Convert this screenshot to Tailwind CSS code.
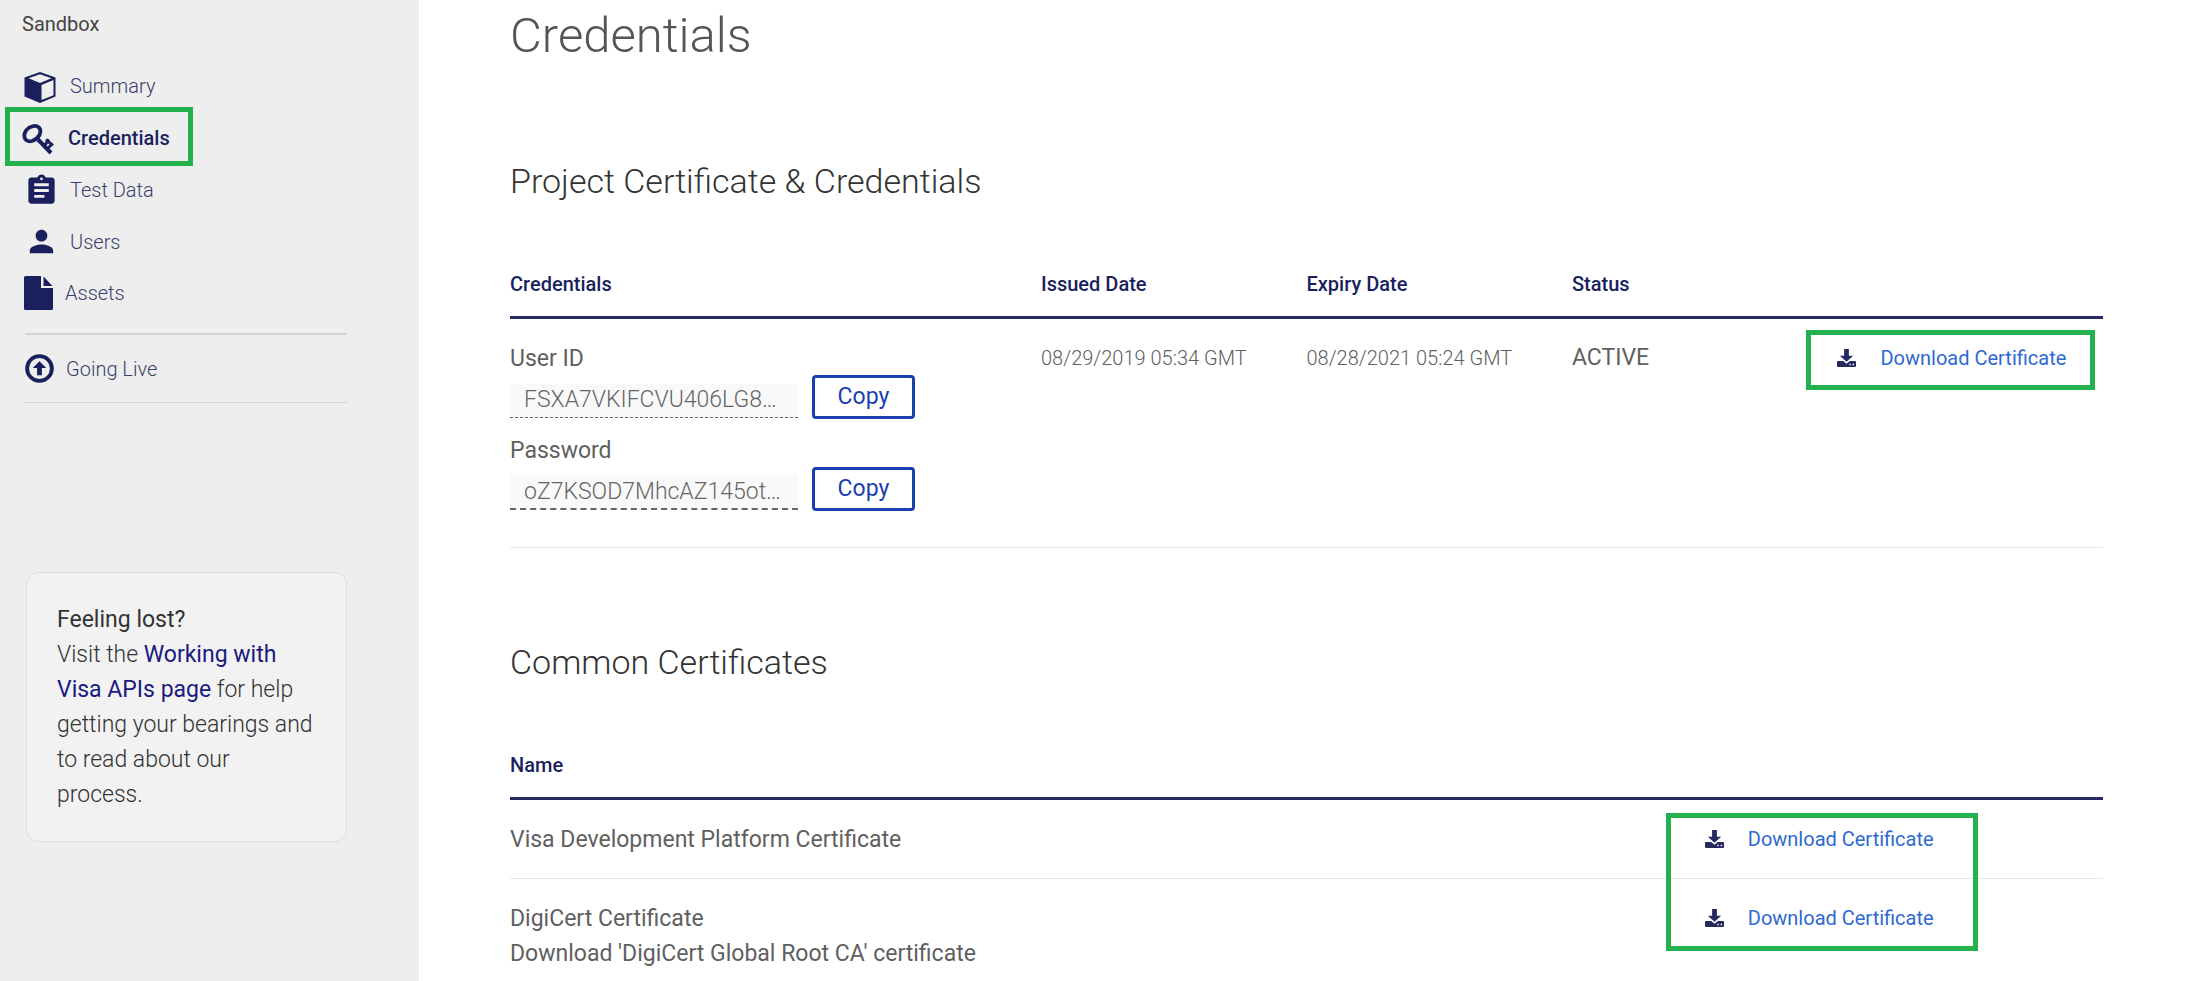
<!DOCTYPE html>
<html lang="en">
<head>
<meta charset="utf-8">
<title>Credentials</title>
<script src="https://cdn.jsdelivr.net/npm/@tailwindcss/browser@4"></script>
</head>
<body class="bg-white font-['Roboto',sans-serif] text-[#606060]">
<svg class="hidden" aria-hidden="true">
  <symbol id="download" viewBox="0 0 20 20">
    <path d="M7.500 0h5v7h4.500L10 13.500 3 7h4.500z"/>
    <path fill-rule="evenodd" d="M1 12.500H6.500L10 15.500l3.500-3H19q1 0 1 1v4.500q0 1-1 1H1q-1 0-1-1v-4.500q0-1 1-1zM13 15.500V17h1.500v-1.500zM16.500 15.500V17H18v-1.500z"/>
  </symbol>
</svg>
<div class="flex min-h-screen">
  <aside class="w-[419px] shrink-0 bg-[#eee] pt-2">
    <p class="pl-[22px] text-[20px] leading-8 text-[#444]">Sandbox</p>
    <nav class="pt-5 text-[20px] font-light text-[#3c3f6b]">
      <ul>
        <li><a href="#" class="flex h-[52px] items-center gap-[14px] pl-6">
          <svg class="h-[34px] w-8" viewBox="0 0 32 34" fill="#1a1f5e"><path fill-rule="evenodd" d="M16 3 31.500 8.500V27.500L16 34 .500 27.500V8.500zM16 5.200 4.500 9.200 16 14l11.500-4.800zM17.500 16v15L29.500 26.200V11z"/></svg>
          <span>Summary</span></a></li>
        <li class="relative"><a href="#" aria-current="page" class="flex h-[52px] items-center gap-[14px] pl-[22px] font-medium text-[#1a1f5e]">
          <svg class="h-[34px] w-8" viewBox="0 0 32 34" fill="none" stroke="#1a1f5e"><path stroke-width="3.800" d="M10 5.500Q14 4 17 6.500Q19.500 9.500 17.500 14Q15 18.500 10 20Q6 21 3.500 18.500Q1.500 15.500 3 11.500Q5 7 10 5.500z"/><path stroke-width="4" d="M16 18.500 29 32"/><path stroke-width="3" d="M22.500 24.500 27 18.500M25.500 27.500 31 22.500M24 18.500 29.500 23.500"/></svg>
          <span>Credentials</span></a>
          <div class="pointer-events-none absolute -top-[5px] -bottom-[2px] left-[5px] w-[188px] border-[5px] border-[#22b14c]"></div></li>
        <li><a href="#" class="flex h-[52px] items-center gap-[11px] pl-6">
          <svg class="size-[35px]" viewBox="0 0 24 24" fill="#1a1f5e"><path d="M19 3h-4.180C14.400 1.840 13.300 1 12 1s-2.400.840-2.820 2H5c-1.100 0-2 .900-2 2v14c0 1.100.900 2 2 2h14c1.100 0 2-.900 2-2V5c0-1.100-.900-2-2-2zm-7 0c.550 0 1 .450 1 1s-.450 1-1 1-1-.450-1-1 .450-1 1-1zm2 14H7v-2h7v2zm3-4H7v-2h10v2zm0-4H7V7h10v2z"/></svg>
          <span>Test Data</span></a></li>
        <li><a href="#" class="flex h-[51px] items-center gap-[11px] pl-6">
          <svg class="size-[35px]" viewBox="0 0 24 24" fill="#1a1f5e"><path d="M12 12c2.210 0 4-1.790 4-4s-1.790-4-4-4-4 1.790-4 4 1.790 4 4 4zm0 2c-2.670 0-8 1.340-8 4v2h16v-2c0-2.660-5.330-4-8-4z"/></svg>
          <span>Users</span></a></li>
        <li><a href="#" class="flex h-[52px] items-center gap-3 pl-6">
          <svg class="h-[34px] w-[29px]" viewBox="0 0 29 34" fill="#1a1f5e"><path d="M1.500 0H17v12h12v20.500q0 1.500-1.500 1.500h-26Q0 34 0 32.500v-31Q0 0 1.500 0zM19.500.500 28.500 10h-9z"/></svg>
          <span>Assets</span></a></li>
      </ul>
      <div class="mr-[72px] ml-[25px] mt-[14px] border-t-2 border-b border-[#d3d3d3]">
        <a href="#" class="flex h-[67px] items-center gap-3">
          <svg class="size-[29px]" viewBox="0 0 30 30"><circle cx="15" cy="15" r="12.800" fill="none" stroke="#1a1f5e" stroke-width="4"/><path fill="#1a1f5e" d="M15 7.500 22 14.500h-4.500V22h-5v-7.500H8z"/></svg>
          <span>Going Live</span></a>
      </div>
    </nav>
    <section class="mt-[169px] mr-[72px] ml-[26px] rounded-xl border border-[#ddd] bg-[#f2f2f2] px-[30px] py-[29px] text-[23px] leading-[35px] font-light text-[#333]">
      <h2 class="font-normal">Feeling lost?</h2>
      <p>Visit the <a href="#" class="font-normal text-[#1a1a80]">Working with Visa APIs page</a> for help getting your bearings and to read about our process.</p>
    </section>
  </aside>

  <main class="min-w-0 flex-1 pr-[90px] pl-[91px]">
    <h1 class="pt-2 text-[49px] leading-[56px] font-light text-[#555]">Credentials</h1>
    <h2 class="mt-[97px] text-[34px] leading-10 font-light text-[#333]">Project Certificate &amp; Credentials</h2>
    <table class="mt-[57px] w-full table-fixed border-collapse text-left">
      <thead class="border-b-3 border-[#26295f] text-[20px] leading-6 text-[#1a1f5e]">
        <tr>
          <th class="w-1/3 pt-[14px] pb-5 font-medium">Credentials</th>
          <th class="w-1/6 pt-[14px] pb-5 font-medium">Issued Date</th>
          <th class="w-1/6 pt-[14px] pb-5 font-medium">Expiry Date</th>
          <th class="w-1/6 pt-[14px] pb-5 font-medium">Status</th>
          <th class="w-1/6 pt-[14px] pb-5"></th>
        </tr>
      </thead>
      <tbody class="border-b border-[#e8e8e8] align-top">
        <tr>
          <td class="pt-[23px] pb-9">
            <label for="user-id" class="block text-[23px] leading-[33px]">User ID</label>
            <div class="flex items-center gap-[14px]">
              <input id="user-id" readonly value="FSXA7VKIFCVU406LG8…" class="mt-[7px] h-[34px] w-[288px] border-b border-dashed border-[#666] bg-[#f9f9f9] px-[14px] text-[23px] font-light text-[#666]">
              <button type="button" class="h-11 w-[103px] rounded-sm border-3 border-[#1a3fae] text-[23px] leading-8 text-[#1a3fae]">Copy</button>
            </div>
            <label for="password" class="mt-[15px] block text-[23px] leading-[33px]">Password</label>
            <div class="flex items-center gap-[14px]">
              <input id="password" readonly value="oZ7KSOD7MhcAZ145ot…" class="mt-[7px] h-[35px] w-[288px] border-b-2 border-dashed border-[#666] bg-[#f9f9f9] px-[14px] text-[23px] font-light text-[#666]">
              <button type="button" class="h-11 w-[103px] rounded-sm border-3 border-[#1a3fae] text-[23px] leading-8 text-[#1a3fae]">Copy</button>
            </div>
          </td>
          <td class="pt-[23px] text-[20px] leading-8 font-light">08/29/2019 05:34 GMT</td>
          <td class="pt-[23px] text-[20px] leading-8 font-light">08/28/2021 05:24 GMT</td>
          <td class="pt-[23px] text-[23px] leading-8">ACTIVE</td>
          <td class="relative pt-[23px] text-[20px] leading-8">
            <a href="#" class="flex items-center gap-6 whitespace-nowrap text-[#2f69d2]"><svg class="size-[19px] fill-[#26295f]"><use href="#download"/></svg>Download Certificate</a>
            <div class="pointer-events-none absolute top-[11px] -left-[31px] h-[60px] w-[289px] border-[5px] border-[#22b14c]"></div>
          </td>
        </tr>
      </tbody>
    </table>

    <h2 class="mt-[94px] text-[34px] leading-10 font-light text-[#333]">Common Certificates</h2>
    <div class="relative mt-[57px]">
      <table class="w-full table-fixed border-collapse text-left">
        <thead class="border-b-3 border-[#26295f] text-[20px] leading-6 text-[#1a1f5e]">
          <tr><th class="w-3/4 pt-[14px] pb-5 font-medium">Name</th><th class="w-1/4"></th></tr>
        </thead>
        <tbody class="align-top text-[23px] leading-[35px]">
          <tr class="border-b border-[#e8e8e8]">
            <td class="pt-[22px] pb-[21px]">Visa Development Platform Certificate</td>
            <td class="pt-[22px]"><a href="#" class="flex items-center gap-6 text-[20px] whitespace-nowrap text-[#2f69d2]"><svg class="size-[19px] fill-[#26295f]"><use href="#download"/></svg>Download Certificate</a></td>
          </tr>
          <tr>
            <td class="pt-[22px]">DigiCert Certificate<br>Download 'DigiCert Global Root CA' certificate</td>
            <td class="pt-[22px]"><a href="#" class="flex items-center gap-6 text-[20px] whitespace-nowrap text-[#2f69d2]"><svg class="size-[19px] fill-[#26295f]"><use href="#download"/></svg>Download Certificate</a></td>
          </tr>
        </tbody>
      </table>
      <div class="pointer-events-none absolute top-[74px] right-[125px] h-[138px] w-[312px] border-[5px] border-[#22b14c]"></div>
    </div>
  </main>
</div>
</body>
</html>
